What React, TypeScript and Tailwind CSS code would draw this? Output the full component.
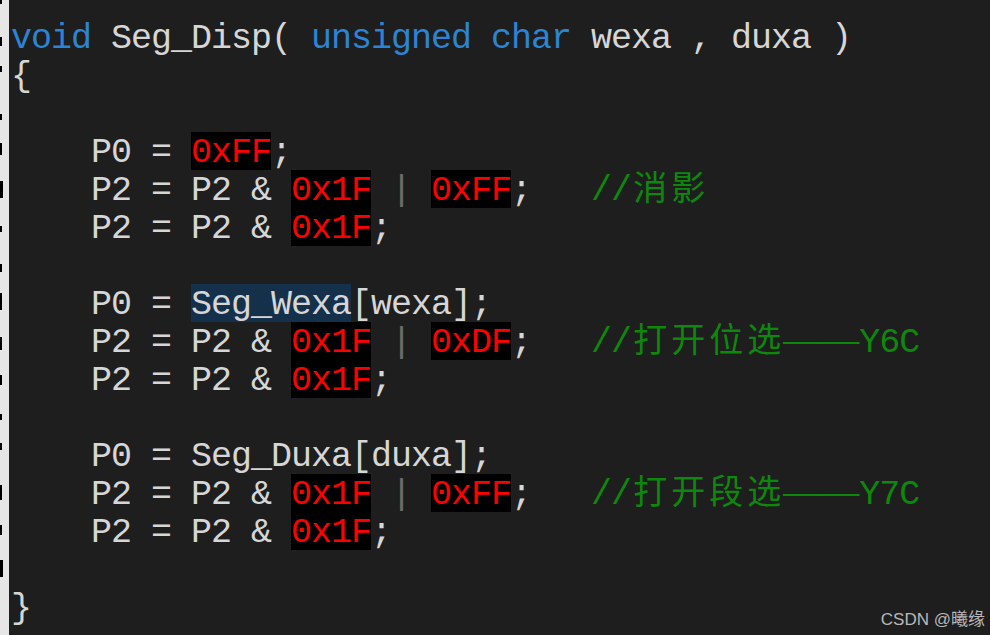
import React from "react";

type Seg = { t: string; k?: "kw" | "num" | "sel" | "cm" | "bar" };

const CJK = /[\u3000-\u9fff\uff00-\uffef]/;

function Comment({ text }: { text: string }) {
  const parts: React.ReactNode[] = [];
  let buf = "";
  const flush = (key: string) => {
    if (buf) {
      parts.push(<span key={key}>{buf}</span>);
      buf = "";
    }
  };
  Array.from(text).forEach((ch, i) => {
    if (ch === "\u2014") {
      flush("a" + i);
      parts.push(
        <span
          key={"d" + i}
          className="inline-block w-[38px] tracking-normal font-['Liberation_Serif',serif] text-[38px] leading-[31px]"
        >
          {ch}
        </span>
      );
    } else if (CJK.test(ch)) {
      flush("a" + i);
      parts.push(
        <span
          key={"c" + i}
          className="inline-block w-[38px] text-center tracking-normal font-['Noto_Sans_CJK_SC',sans-serif] text-[34px] leading-[31px]"
        >
          {ch}
        </span>
      );
    } else {
      buf += ch;
    }
  });
  flush("end");
  return <span className="text-[#0d880d]">{parts}</span>;
}

function Line({ segs }: { segs: Seg[] }) {
  return (
    <div className="h-[38px] leading-[42px] whitespace-pre">
      {segs.map((s, i) => {
        if (s.k === "kw")
          return (
            <span key={i} className="text-[#2c84d4]">
              {s.t}
            </span>
          );
        if (s.k === "num")
          return (
            <span key={i} className="inline-block h-[38px] align-top bg-black text-[#ff0000]">
              {s.t}
            </span>
          );
        if (s.k === "sel")
          return (
            <span key={i} className="inline-block h-[38px] align-top bg-[#15304a]">
              {s.t}
            </span>
          );
        if (s.k === "bar")
          return (
            <span key={i} className="text-[#6c6c6c]">
              {s.t}
            </span>
          );
        if (s.k === "cm") return <Comment key={i} text={s.t} />;
        return <span key={i}>{s.t}</span>;
      })}
    </div>
  );
}

const lines: Seg[][] = [
  [
    { t: "void", k: "kw" },
    { t: " Seg_Disp( " },
    { t: "unsigned", k: "kw" },
    { t: " " },
    { t: "char", k: "kw" },
    { t: " wexa , duxa )" },
  ],
  [{ t: "{" }],
  [],
  [{ t: "    P0 = " }, { t: "0xFF", k: "num" }, { t: ";" }],
  [
    { t: "    P2 = P2 & " },
    { t: "0x1F", k: "num" },
    { t: " " },
    { t: "|", k: "bar" },
    { t: " " },
    { t: "0xFF", k: "num" },
    { t: ";   " },
    { t: "//消影", k: "cm" },
  ],
  [{ t: "    P2 = P2 & " }, { t: "0x1F", k: "num" }, { t: ";" }],
  [],
  [{ t: "    P0 = " }, { t: "Seg_Wexa", k: "sel" }, { t: "[wexa];" }],
  [
    { t: "    P2 = P2 & " },
    { t: "0x1F", k: "num" },
    { t: " " },
    { t: "|", k: "bar" },
    { t: " " },
    { t: "0xDF", k: "num" },
    { t: ";   " },
    { t: "//打开位选——Y6C", k: "cm" },
  ],
  [{ t: "    P2 = P2 & " }, { t: "0x1F", k: "num" }, { t: ";" }],
  [],
  [{ t: "    P0 = Seg_Duxa[duxa];" }],
  [
    { t: "    P2 = P2 & " },
    { t: "0x1F", k: "num" },
    { t: " " },
    { t: "|", k: "bar" },
    { t: " " },
    { t: "0xFF", k: "num" },
    { t: ";   " },
    { t: "//打开段选——Y7C", k: "cm" },
  ],
  [{ t: "    P2 = P2 & " }, { t: "0x1F", k: "num" }, { t: ";" }],
  [],
  [{ t: "}" }],
];

const marks: [number, number, number][] = [
  [0, 4, 2],
  [37, 46, 2],
  [66, 72, 2],
  [114, 120, 2],
  [143, 155, 2],
  [181, 198, 3],
  [226, 232, 2],
  [264, 272, 2],
  [293, 310, 2],
  [337, 350, 2],
  [375, 385, 2],
  [414, 420, 2],
  [443, 450, 2],
  [485, 500, 2],
  [525, 535, 2],
  [560, 577, 3],
];

export default function App() {
  return (
    <div className="relative flex w-[990px] h-[635px] overflow-hidden bg-[#1e1e1e]">
      <svg width="9" height="635" viewBox="0 0 9 635" className="shrink-0 block">
        <rect x="0" y="0" width="9" height="635" fill="#e6e6e6" />
        {marks.map(([a, b, w], i) => (
          <rect key={i} x="0" y={a} width={w} height={b - a} fill="#000" />
        ))}
      </svg>
      <div className="pl-[2px] pt-[18px] font-['Liberation_Mono',monospace] text-[35px] tracking-[-1.0034px] text-[#d6d6d6]">
        {lines.map((segs, i) => (
          <Line key={i} segs={segs} />
        ))}
      </div>
      <div className="absolute right-[5px] bottom-[7px] font-['Liberation_Sans','Noto_Sans_CJK_SC',sans-serif] text-[17px] leading-none text-[#b8b8b8]">
        CSDN @曦缘
      </div>
    </div>
  );
}
